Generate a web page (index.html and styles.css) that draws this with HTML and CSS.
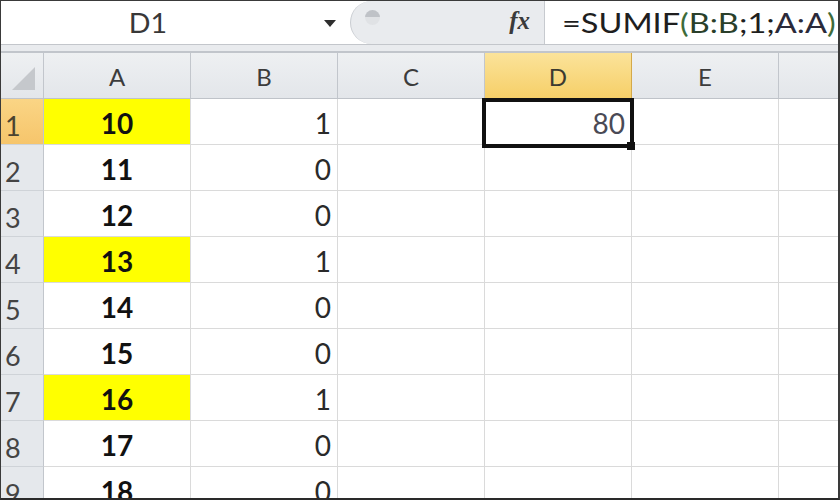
FILE: index.html
```html
<!DOCTYPE html>
<html>
<head>
<meta charset="utf-8">
<link rel="stylesheet" href="styles.css">
</head>
<body>
<div class="window">
  <div class="fbar">
    <div class="namebox">
      <span class="name">D1</span>
      <span class="drop"></span>
    </div>
    <div class="fxzone">
      <span class="knob"></span>
      <span class="fx">fx</span>
    </div>
    <div class="formula"><span class="ftext">=SUMIF<span class="p">(</span><span class="r1">B:B</span>;1;<span class="r2">A:A</span><span class="p">)</span></span></div>
  </div>
  <div class="sep"></div>
  <div class="grid">
    <div class="corner"><span class="tri"></span></div>
    <div class="ch">A</div><div class="ch">B</div><div class="ch">C</div><div class="ch sel">D</div><div class="ch">E</div><div class="ch last"></div>

    <div class="rh sel">1</div><div class="c a y">10</div><div class="c b">1</div><div class="c"></div><div class="c d active"><span class="v">80</span><span class="box"></span><span class="handle"></span></div><div class="c"></div><div class="c last"></div>
    <div class="rh">2</div><div class="c a">11</div><div class="c b">0</div><div class="c"></div><div class="c"></div><div class="c"></div><div class="c last"></div>
    <div class="rh">3</div><div class="c a">12</div><div class="c b">0</div><div class="c"></div><div class="c"></div><div class="c"></div><div class="c last"></div>
    <div class="rh">4</div><div class="c a y">13</div><div class="c b">1</div><div class="c"></div><div class="c"></div><div class="c"></div><div class="c last"></div>
    <div class="rh">5</div><div class="c a">14</div><div class="c b">0</div><div class="c"></div><div class="c"></div><div class="c"></div><div class="c last"></div>
    <div class="rh">6</div><div class="c a">15</div><div class="c b">0</div><div class="c"></div><div class="c"></div><div class="c"></div><div class="c last"></div>
    <div class="rh">7</div><div class="c a y">16</div><div class="c b">1</div><div class="c"></div><div class="c"></div><div class="c"></div><div class="c last"></div>
    <div class="rh">8</div><div class="c a">17</div><div class="c b">0</div><div class="c"></div><div class="c"></div><div class="c"></div><div class="c last"></div>
    <div class="rh">9</div><div class="c a">18</div><div class="c b">0</div><div class="c"></div><div class="c"></div><div class="c"></div><div class="c last"></div>
  </div>
</div>
</body>
</html>
```
FILE: styles.css
```css
* { box-sizing: border-box; }
html, body { margin: 0; padding: 0; background: #2a2a2a; }
.window {
  width: 840px;
  height: 500px;
  overflow: hidden;
  background: #fff;
  border-top: 1px solid #3a3a3a;
  border-left: 1px solid #3a3a3a;
  border-right: 2px solid #3a3a3a;
  border-bottom: 2px solid #2a2a2a;
  font-family: Lato, "Open Sans", "Liberation Sans", sans-serif;
  display: flex;
  flex-direction: column;
}
.fbar {
  height: 43px;
  display: flex;
  flex: none;
  background: #fff;
}
.namebox {
  width: 349px;
  display: flex;
  align-items: center;
  padding-right: 14px;
}
.name {
  width: 294px;
  text-align: center;
  font-size: 26px;
  color: #383838;
  transform: scaleX(1.1);
}
.drop {
  margin-left: auto;
  width: 0; height: 0;
  border-left: 6px solid transparent;
  border-right: 6px solid transparent;
  border-top: 7px solid #2e2e2e;
  margin-top: 2px;
}
.fxzone {
  width: 195px;
  background: #e9ebee;
  border-radius: 22px 0 0 22px;
  border-left: 1px solid #c9ccd1;
  border-right: 1px solid #c7cacf;
  display: flex;
  align-items: center;
  padding: 0 14px 0 14px;
  justify-content: space-between;
}
.knob {
  width: 15px; height: 15px;
  border-radius: 50%;
  background: linear-gradient(#bfc2c7 0 50%, #e0e2e5 50% 100%);
  margin-top: -10px;
}
.fx {
  font-family: "Liberation Serif", "DejaVu Serif", serif;
  font-style: italic;
  font-weight: bold;
  font-size: 25px;
  color: #3a3a3a;
  margin-top: -4px;
}
.formula {
  flex: 1;
  display: flex;
  align-items: center;
  padding-left: 17px;
  font-size: 26px;
  color: #1e1e1e;
  white-space: nowrap;
}
.ftext {
  display: inline-block;
  transform: scaleX(1.25);
  transform-origin: left center;
}
.formula .p { color: #3d6b3a; }
.formula .r1 { color: #2a3f2a; }
.formula .r2 { color: #2a2a3a; }
.sep {
  height: 9px;
  flex: none;
  background: #e9ebee;
  border-top: 1px solid #c3c6cb;
  border-bottom: 2px solid #c1c5cb;
}
.grid {
  display: grid;
  grid-template-columns: 43px 147px 147px 147px 147px 147px 1fr;
  grid-template-rows: 46px repeat(9, 46px);
}
.corner, .ch {
  background: linear-gradient(#eef0f2, #e3e6ea);
  border-right: 1px solid #c2c6cc;
  border-bottom: 1px solid #bfc3c9;
}
.corner { position: relative; }
.tri {
  position: absolute;
  right: 8px; bottom: 8px;
  width: 0; height: 0;
  border-left: 23px solid transparent;
  border-bottom: 23px solid #c5c8cc;
}
.ch {
  display: flex;
  align-items: center;
  justify-content: center;
  font-size: 24px;
  color: #3c3c3c;
  padding-top: 2px;
}
.ch.sel { background: linear-gradient(#fbe39a, #f6cf68); border-right-color: #d4a94a; color: #3c3a30; }
.ch.last { border-right: none; }
.rh {
  background: #e5e8ec;
  border-right: 1px solid #c2c6cc;
  border-bottom: 1px solid #cfd3d8;
  display: flex;
  align-items: center;
  padding-left: 4px;
  font-size: 27px;
  color: #444;
  padding-top: 7px;
}
.rh.sel { background: linear-gradient(#fad585, #f6c56b); color: #4a4330; }
.c {
  border-right: 1px solid #dadada;
  border-bottom: 1px solid #dadada;
  display: flex;
  align-items: flex-end;
  padding-bottom: 4px;
  font-size: 28px;
  color: #222;
  position: relative;
}
.c.last { border-right: none; }
.c.a { justify-content: center; font-weight: bold; color: #111; }
.c.y { background: #ffff00; }
.c.b { justify-content: flex-end; padding-right: 6px; color: #2a2a2a; }
.c.d { justify-content: flex-end; padding-right: 6px; color: #4a4a55; }
.c.active { z-index: 2; }
.box {
  position: absolute;
  left: -3px; top: -1px; right: -3px; bottom: -4px;
  border: 4px solid #111;
}
.handle {
  position: absolute;
  right: -4px; bottom: -6px;
  width: 8px; height: 8px;
  background: #111;
}
```
